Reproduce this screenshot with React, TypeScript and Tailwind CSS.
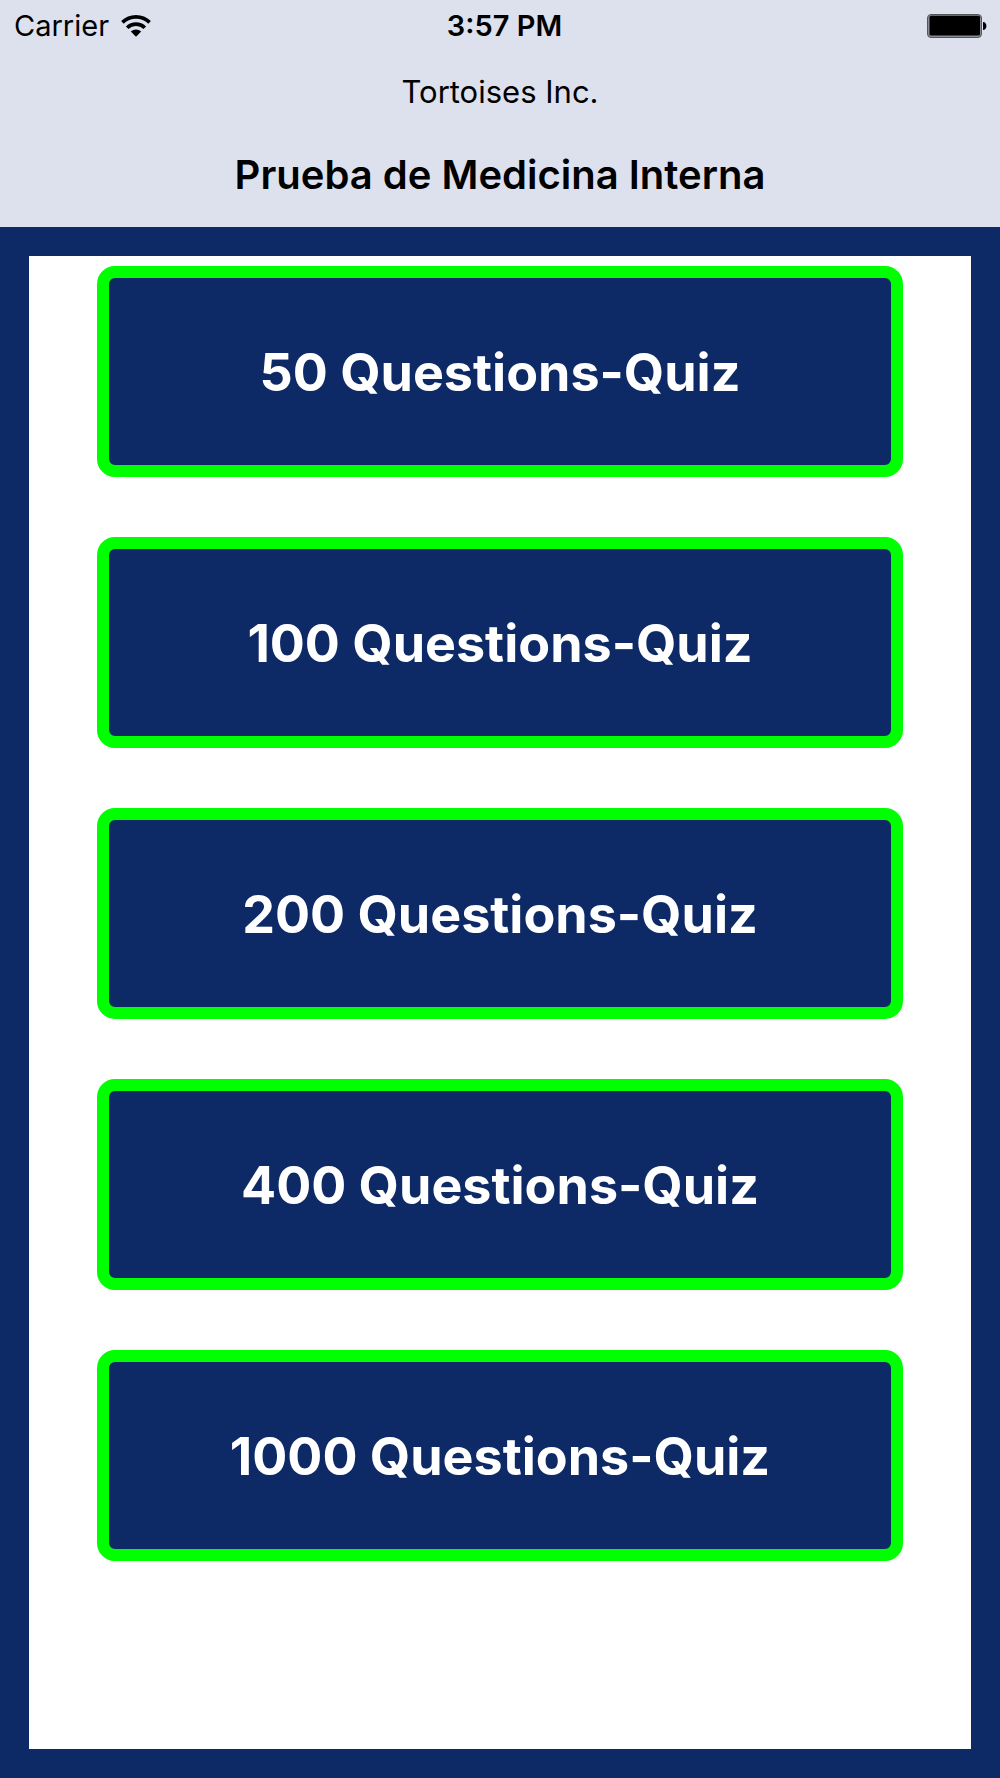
import React from 'react';

const quizzes = [50, 100, 200, 400, 1000];

function WifiIcon() {
  return (
    <svg className="h-[22px] w-[30px]" viewBox="0 0 30 22" role="img" aria-label="Wi-Fi">
      <g fill="none" stroke="#000" strokeWidth="3.7">
        <path d="M1.4 7.4a19.6 19.6 0 0 1 27.2 0" />
        <path d="M6.2 12.7a12.6 12.6 0 0 1 17.6 0" />
      </g>
      <path d="M9.8 16.6a7.6 7.6 0 0 1 10.4 0L15 21.8z" />
    </svg>
  );
}

function BatteryIcon() {
  return (
    <svg className="h-6 w-[60px]" viewBox="0 0 60 24" role="img" aria-label="Battery full">
      <rect x="0.5" y="0.5" width="54" height="23" rx="3.5" fill="#8b8d95" stroke="#55565c" />
      <rect x="2.5" y="1.8" width="50.5" height="19.8" rx="1.5" />
      <path d="M56 8c4.5 0 4.5 8 0 8z" />
    </svg>
  );
}

export default function App() {
  return (
    <div className="flex min-h-screen flex-col bg-[#0d2a67] font-['Inter',sans-serif]">
      <header className="bg-[#dde1ee] text-black">
        <div className="grid h-[51px] grid-cols-[1fr_auto_1fr] items-center pr-[13px] pl-[14px] text-[29px]">
          <div className="flex items-center gap-3">
            <span>Carrier</span>
            <WifiIcon />
          </div>
          <time className="pl-2 text-center font-semibold">3:57 PM</time>
          <div className="flex justify-end">
            <BatteryIcon />
          </div>
        </div>
        <p className="pt-5 text-center text-[31px] leading-[42px]">Tortoises Inc.</p>
        <h1 className="pt-9 pb-[26px] text-center text-[40px] leading-[52px] font-semibold">
          Prueba de Medicina Interna
        </h1>
      </header>

      <main className="m-[29px] flex flex-1 flex-col gap-[60px] bg-white px-[68px] py-[10px]">
        {quizzes.map((count) => (
          <button
            key={count}
            type="button"
            className="h-[211px] w-full rounded-[18px] border-[12px] border-[#00ff00] bg-[#0d2a67] pt-[2px] text-[52px] font-bold text-white"
          >
            {count} Questions-Quiz
          </button>
        ))}
      </main>
    </div>
  );
}
